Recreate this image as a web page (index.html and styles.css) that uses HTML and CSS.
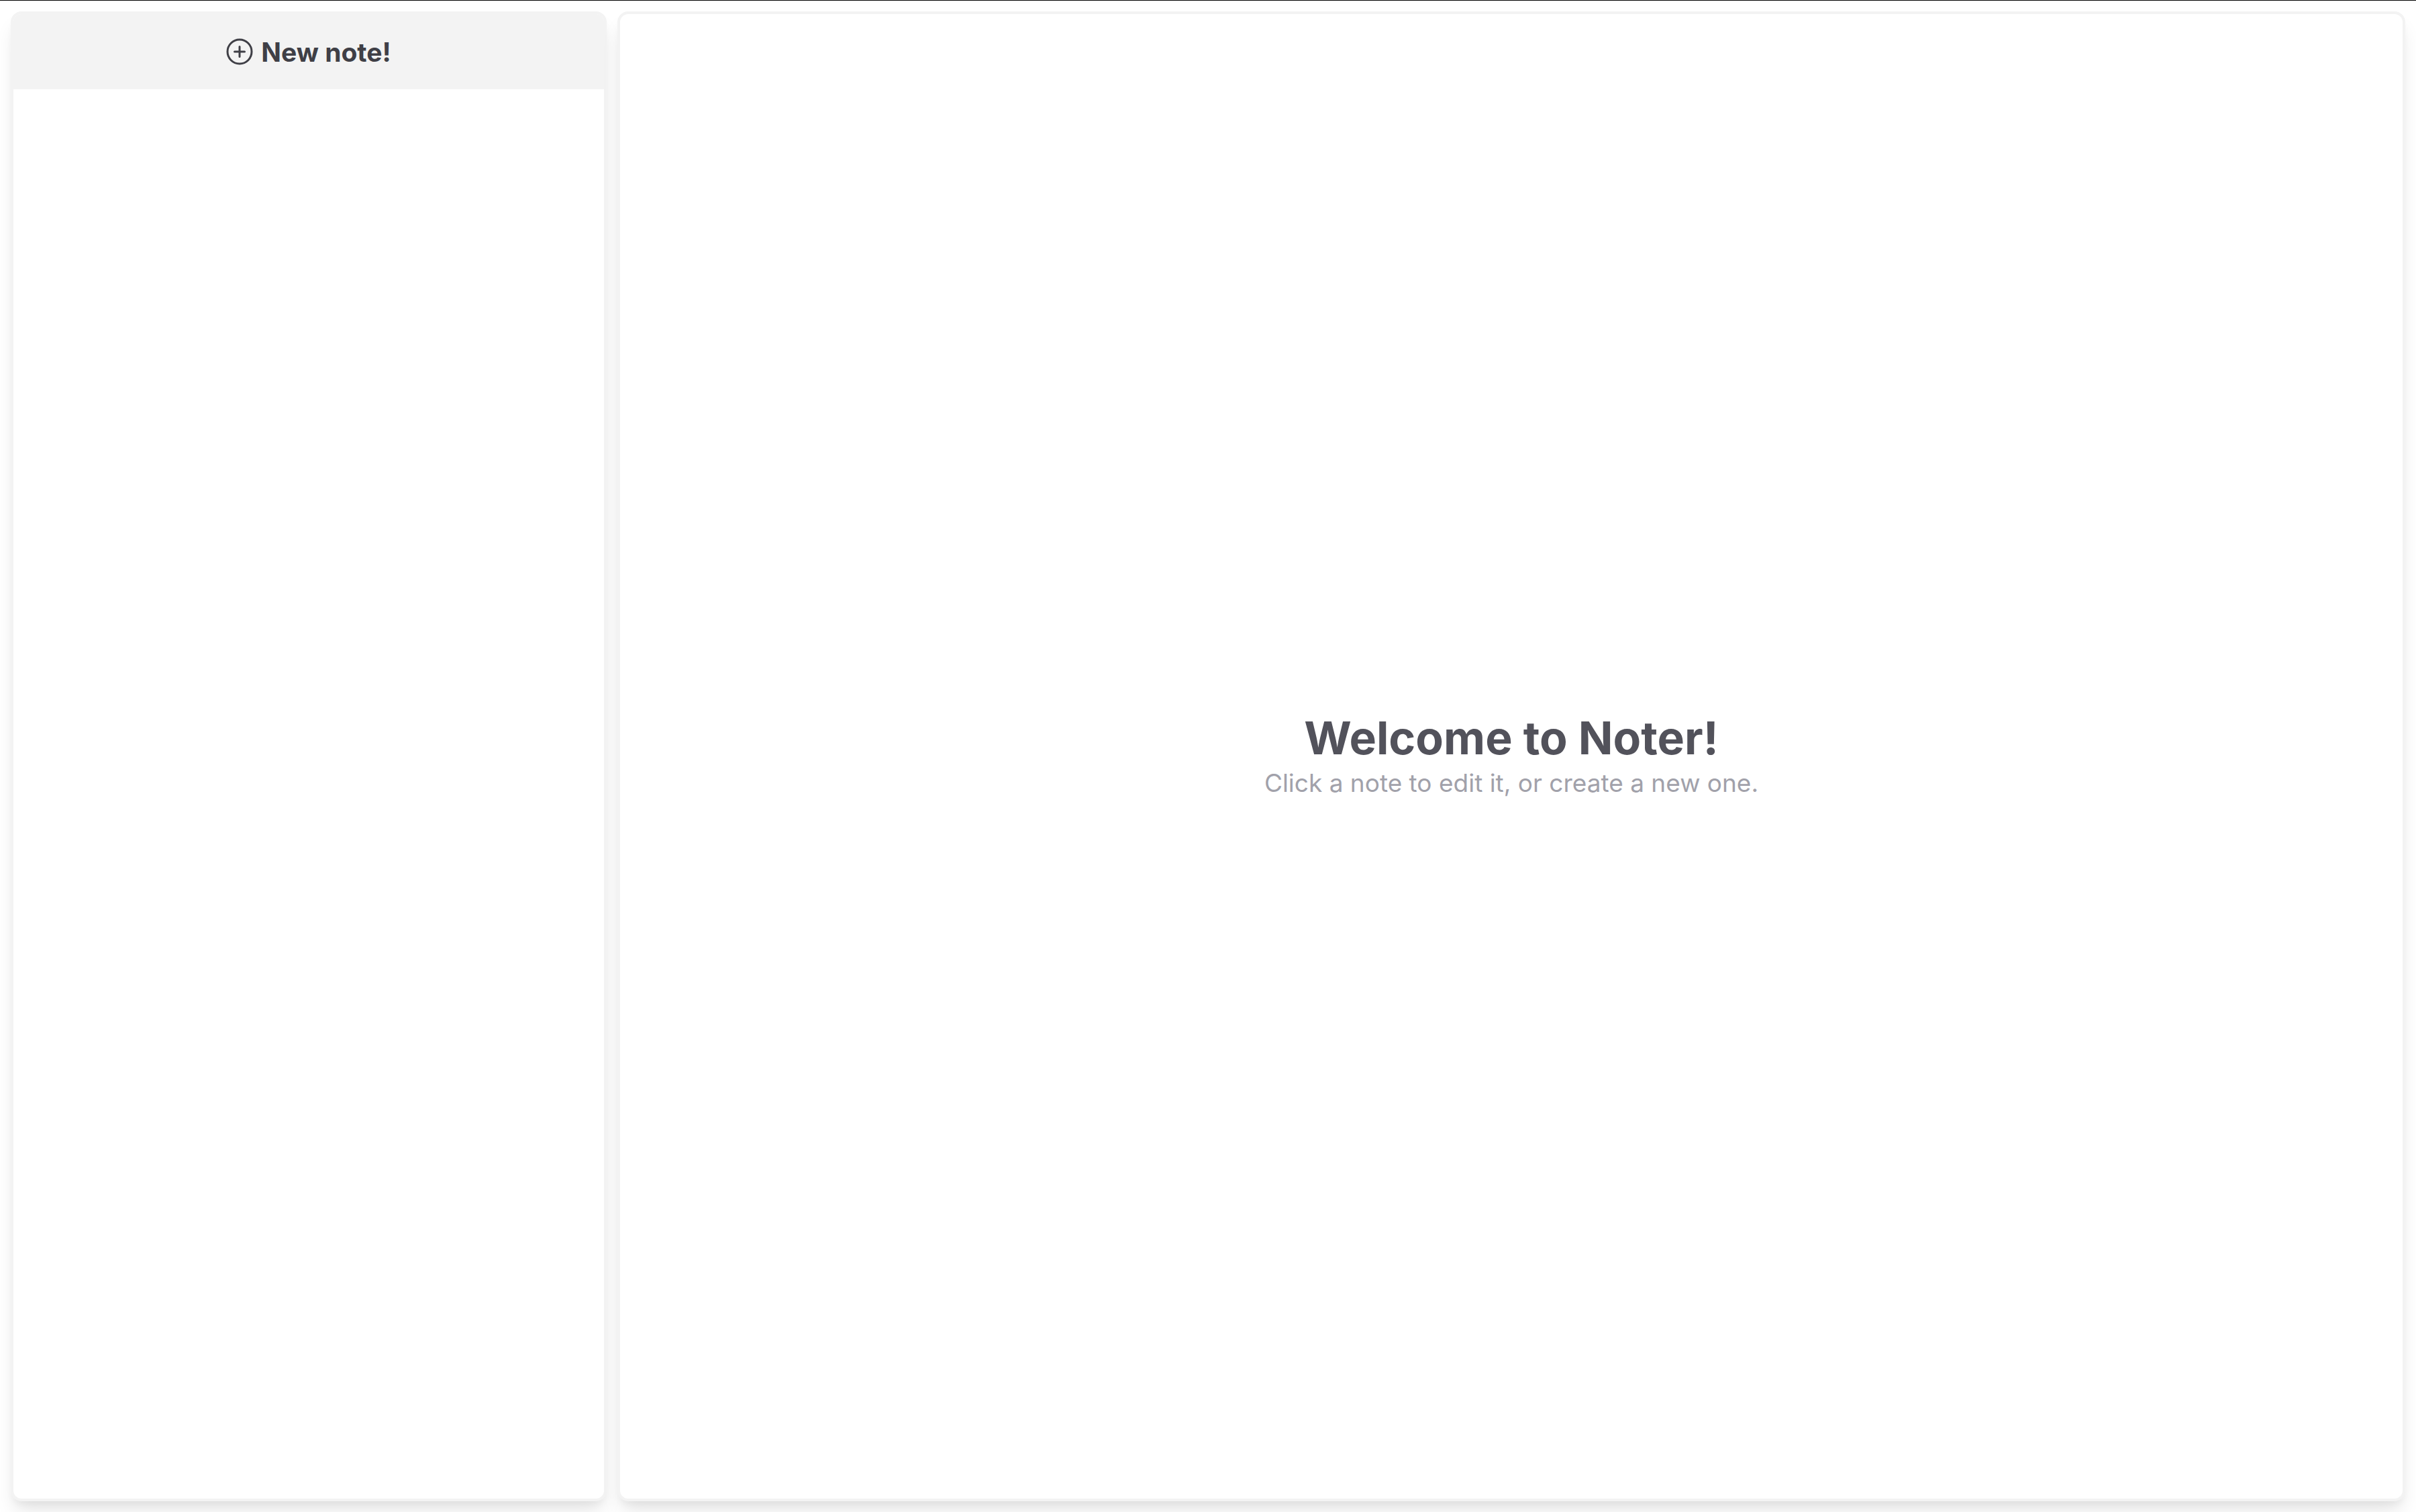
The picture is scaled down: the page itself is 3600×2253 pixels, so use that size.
FILE: index.html
```html
<!DOCTYPE html>
<html lang="en">
<head>
<meta charset="utf-8">
<title>Noter</title>
<meta name="viewport" content="width=device-width, initial-scale=1">
<link rel="stylesheet" href="styles.css">
</head>
<body>
<div class="app">
  <aside class="panel">
    <button class="new-note" type="button">
      <svg class="icon" viewBox="0 0 40 40" fill="none" stroke="currentColor" stroke-width="3" stroke-linecap="round" aria-hidden="true">
        <circle cx="20" cy="20" r="18"/>
        <path d="M20 12.5v15M12.5 20h15"/>
      </svg>
      <span>New note!</span>
    </button>
  </aside>
  <main class="panel welcome">
    <h1 class="title">Welcome to Noter!</h1>
    <p class="hint">Click a note to edit it, or create a new one.</p>
  </main>
</div>
</body>
</html>
```
FILE: styles.css
```css
* {
  box-sizing: border-box;
}

body {
  margin: 0;
  background: #fff;
  font-family: Inter, "Liberation Sans", sans-serif;
}

.app {
  display: grid;
  grid-template-columns: 1fr 3fr;
  gap: 16px;
  min-height: 100vh;
  padding: 16px;
  border-top: 1px solid #000;
}

.panel {
  min-width: 0;
  border: 4px solid #f3f3f3;
  border-radius: 16px;
  background: #fff;
  box-shadow: 0 20px 30px -6px rgba(0, 0, 0, 0.1), 0 8px 12px -4px rgba(0, 0, 0, 0.05);
}

.new-note {
  display: flex;
  align-items: center;
  justify-content: center;
  gap: 12px;
  width: 100%;
  height: 112px;
  padding: 0;
  border: 0;
  border-radius: 12px 12px 0 0;
  background: #f3f3f3;
  color: #3f3f46;
  font: inherit;
  font-size: 39px;
  font-weight: 700;
  cursor: pointer;
}

.icon {
  width: 40px;
  height: 40px;
}

.welcome {
  display: flex;
  flex-direction: column;
  align-items: center;
  justify-content: center;
}

.title {
  margin: 0;
  color: #52525b;
  font-size: 68px;
  font-weight: 700;
  line-height: 80px;
}

.hint {
  margin: 0;
  color: #a1a1aa;
  font-size: 37px;
  line-height: 56px;
}
```
